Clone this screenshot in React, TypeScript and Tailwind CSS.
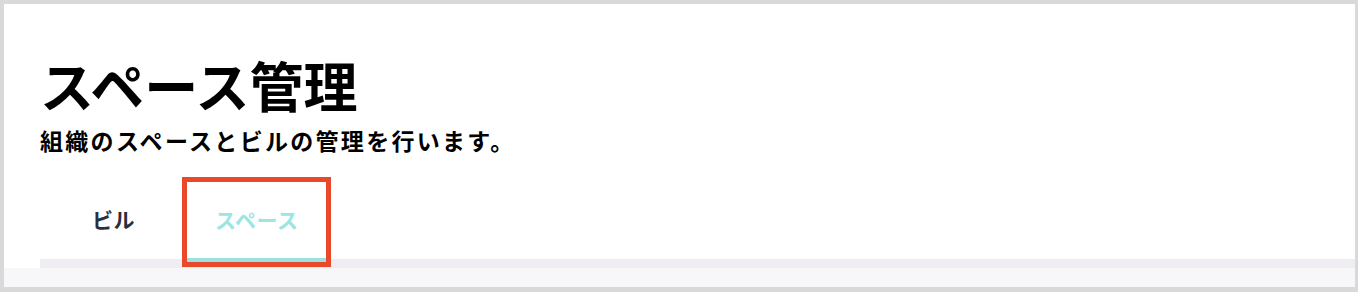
import { useState } from "react";

const tabs = ["ビル", "スペース"];

function Tabs() {
  const [active, setActive] = useState("スペース");

  return (
    <div className="relative z-10 -mb-[3px] flex items-end gap-6 pl-[60px]">
      {tabs.map((tab) => {
        const isActive = tab === active;
        return (
          <button
            key={tab}
            onClick={() => setActive(tab)}
            className={`relative flex flex-col pt-[27px] text-[21px] font-semibold leading-none tracking-[0.5px] ${
              isActive ? "text-[#9be5e4]" : "text-[#29303d]"
            }`}
          >
            <span className="block h-[21px] whitespace-nowrap px-7">{tab}</span>
            <span className={`mt-[28px] block h-1 w-full ${isActive ? "bg-[#98e3e1]" : "bg-transparent"}`} />
            {isActive && <span className="pointer-events-none absolute -inset-[5px] border-[5px] border-[#e9482b]" />}
          </button>
        );
      })}
    </div>
  );
}

export default function App() {
  return (
    <div
      className="h-[292px] w-full bg-[#d9d9d9] pt-1 pr-[3px] pb-[5px] pl-1"
      style={{ fontFamily: '"Noto Sans CJK JP", "Noto Sans", sans-serif' }}
    >
      <div className="flex h-full flex-col bg-white">
        <div className="px-9 pt-[54px]">
          <h1 className="text-[54px] font-bold leading-none text-black">スペース管理</h1>
          <p className="mt-[17px] text-[23px] font-semibold leading-none tracking-[2.3px] text-black">
            組織のスペースとビルの管理を行います。
          </p>
        </div>
        <div className="mt-[30px]">
          <Tabs />
        </div>
        <div className="ml-9 h-[9px] bg-[#efedf2]" />
        <div className="h-[19px] bg-[#f7f7f9]" />
      </div>
    </div>
  );
}
